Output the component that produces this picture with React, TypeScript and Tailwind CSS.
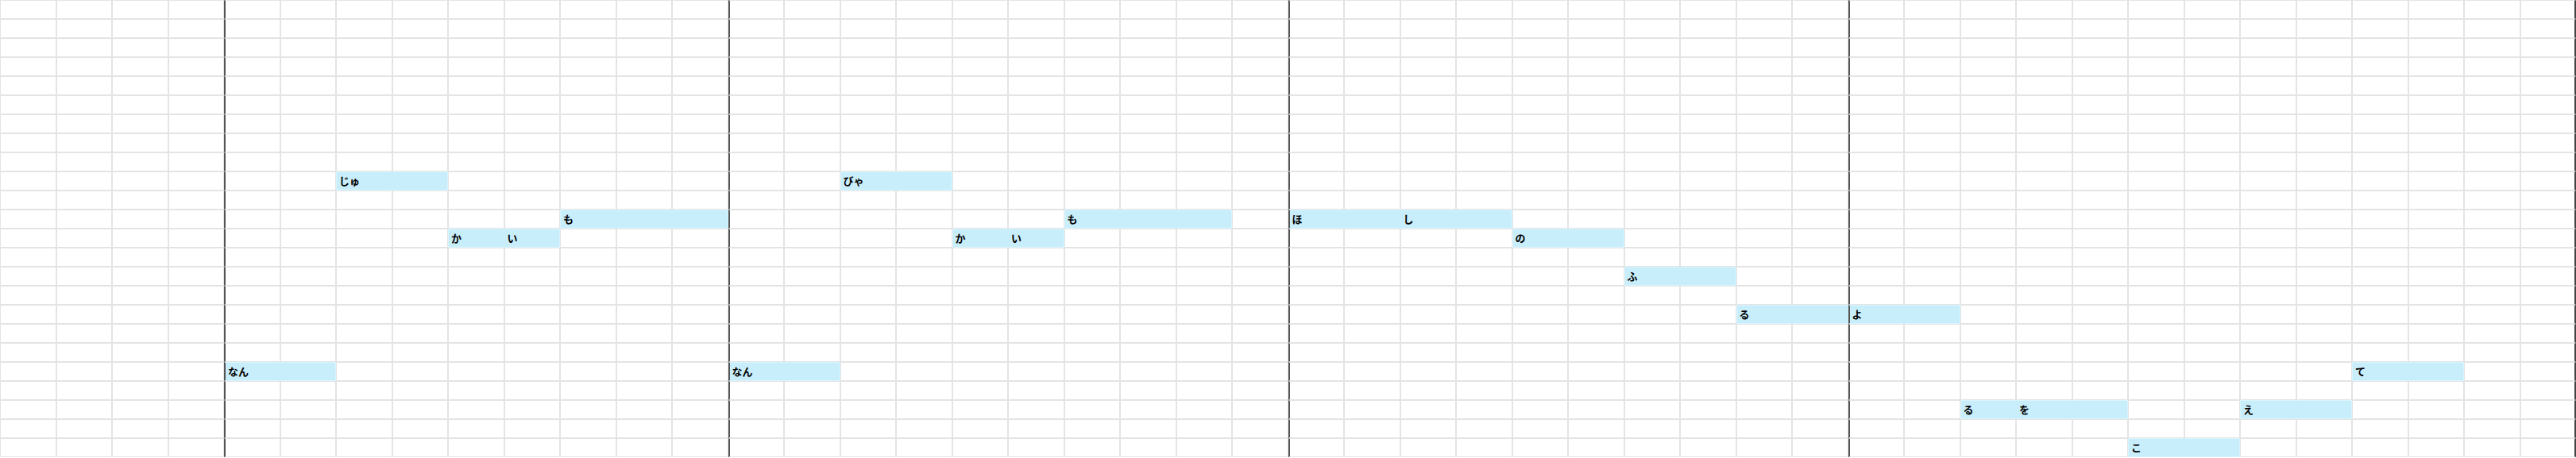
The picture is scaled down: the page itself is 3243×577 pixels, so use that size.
import React from "react";

const COLS = 46;
const ROWS = 24;
const THICK = new Set([4, 13, 23, 33]);

// colored cells: key "row-col" -> text
const notes: Record<string, string> = {};
function add(row: number, start: number, texts: string[]) {
  texts.forEach((t, i) => {
    notes[`${row}-${start + i}`] = t;
  });
}
add(9, 6, ["じゅ", ""]);
add(9, 15, ["びゃ", ""]);
add(11, 10, ["も", "", ""]);
add(11, 19, ["も", "", ""]);
add(11, 23, ["ほ", "", "し", ""]);
add(12, 8, ["か", "い"]);
add(12, 17, ["か", "い"]);
add(12, 27, ["の", ""]);
add(14, 29, ["ふ", ""]);
add(16, 31, ["る", ""]);
add(16, 33, ["よ", ""]);
add(19, 4, ["なん", ""]);
add(19, 13, ["なん", ""]);
add(19, 42, ["て", ""]);
add(21, 35, ["る", "を", ""]);
add(21, 40, ["え", ""]);
add(23, 38, ["こ", ""]);

function Cell({ r, c }: { r: number; c: number }) {
  const key = `${r}-${c}`;
  const on = key in notes;
  const prevOn = `${r}-${c - 1}` in notes;
  const nextOn = `${r}-${c + 1}` in notes;
  const cls = [
    "h-6 min-w-0 box-border border whitespace-nowrap overflow-hidden pl-[3px] text-[13px] font-bold leading-[22px] text-black",
    on ? "bg-[#c9eefb] border-y-[#d9f5fe]" : "bg-white border-[#e4e4e4]",
    on && prevOn ? "border-l-[#c9eefb]" : on ? "border-l-[#d9f5fe]" : "",
    on && nextOn ? "border-r-[#c9eefb]" : on ? "border-r-[#d9f5fe]" : "",
    THICK.has(c) ? "border-l-2 !border-l-[#555555]" : "",
    c === COLS - 1 ? "border-r-2 !border-r-[#444444]" : "",
  ].join(" ");
  return <div className={cls}>{on ? notes[key] : ""}</div>;
}

export default function App() {
  const cells: React.ReactNode[] = [];
  for (let r = 0; r < ROWS; r++) {
    for (let c = 0; c < COLS; c++) {
      cells.push(<Cell key={`${r}-${c}`} r={r} c={c} />);
    }
  }
  return (
    <div
      className="w-[3243px] h-[577px] bg-white overflow-hidden"
      style={{ fontFamily: '"Noto Sans CJK JP", "Noto Sans", sans-serif' }}
    >
      <div className="grid grid-cols-[repeat(46,minmax(0,1fr))] w-[3243px]">
        {cells}
      </div>
    </div>
  );
}
